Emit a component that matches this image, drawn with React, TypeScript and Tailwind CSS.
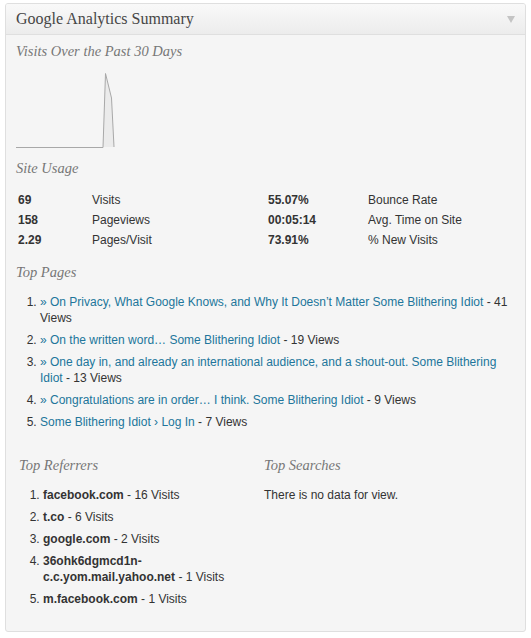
import React from "react";

const serif = { fontFamily: '"Liberation Serif", Georgia, serif' };

function H({ children, className = "" }: { children: React.ReactNode; className?: string }) {
  return (
    <h4
      className={`italic text-[14.5px] leading-[16px] text-[#777] ${className}`}
      style={serif}
    >
      {children}
    </h4>
  );
}

const A = ({ children }: { children: React.ReactNode }) => (
  <a className="text-[#21759b]">{children}</a>
);

export default function App() {
  const pages: React.ReactNode[] = [
    <>
      <A>» On Privacy, What Google Knows, and Why It Doesn’t Matter Some Blithering Idiot</A> - 41 Views
    </>,
    <>
      <A>» On the written word… Some Blithering Idiot</A> - 19 Views
    </>,
    <>
      <A>» One day in, and already an international audience, and a shout-out. Some Blithering Idiot</A> - 13 Views
    </>,
    <>
      <A>» Congratulations are in order… I think. Some Blithering Idiot</A> - 9 Views
    </>,
    <>
      <A>Some Blithering Idiot › Log In</A> - 7 Views
    </>,
  ];
  const refs = [
    ["facebook.com", "16"],
    ["t.co", "6"],
    ["google.com", "2"],
    ["36ohk6dgmcd1n-c.c.yom.mail.yahoo.net", "1"],
    ["m.facebook.com", "1"],
  ];
  const usage = [
    ["69", "Visits", "55.07%", "Bounce Rate"],
    ["158", "Pageviews", "00:05:14", "Avg. Time on Site"],
    ["2.29", "Pages/Visit", "73.91%", "% New Visits"],
  ];
  return (
    <div
      className="bg-white w-[531px] h-[638px] pt-[3px] pl-[5px]"
      style={{ fontFamily: '"Liberation Sans", Arial, sans-serif' }}
    >
      <div className="w-[521px] h-[629px] border border-[#dfdfdf] rounded-[3px] bg-[#f5f5f5] overflow-hidden">
        <div className="h-[31px] flex items-center justify-between pl-[10px] pr-[10px] border-b border-[#dfdfdf] bg-gradient-to-b from-[#f9f9f9] to-[#ececec]">
          <span className="text-[16px] text-[#464646]" style={serif}>
            Google Analytics Summary
          </span>
          <svg width="8" height="7" viewBox="0 0 8 7" className="mt-[1px]">
            <path d="M0 0 H8 L4 7 Z" fill="#c4c4c4" />
          </svg>
        </div>
        <div className="pl-[10px] pr-[10px] text-[12px] text-[#333]">
          <H className="mt-[8px]">Visits Over the Past 30 Days</H>
          <svg width="110" height="75" className="mt-[14px] block" viewBox="0 0 110 75">
            <path d="M87 74 L89.5 0.5 L95.5 25 L98 74 Z" fill="#ebebeb" />
            <path d="M0 74.5 L87 74.5 L89.5 0.5 L95.5 25 L98 74" fill="none" stroke="#a8a8a8" strokeWidth="1" />
          </svg>
          <H className="mt-[12px]">Site Usage</H>
          <div className="mt-[14px] pl-[2px]">
            {usage.map((r) => (
              <div key={r[0]} className="flex h-[20px] items-center">
                <span className="w-[74px] font-bold">{r[0]}</span>
                <span className="w-[176px]">{r[1]}</span>
                <span className="w-[100px] font-bold">{r[2]}</span>
                <span>{r[3]}</span>
              </div>
            ))}
          </div>
          <H className="mt-[14px]">Top Pages</H>
          <ol className="mt-[14px] list-decimal pl-[24px] pr-[4px] leading-[16px]">
            {pages.map((p, i) => (
              <li key={i} className="mb-[6px]">
                {p}
              </li>
            ))}
          </ol>
          <div className="flex mt-[27px]">
            <div className="w-[248px] pl-[3px]">
              <H>Top Referrers</H>
              <ol className="mt-[14px] list-decimal pl-[24px] leading-[16px]">
                {refs.map((r) => (
                  <li key={r[0]} className="mb-[6px] break-words">
                    <b>{r[0]}</b> - {r[1]} Visits
                  </li>
                ))}
              </ol>
            </div>
            <div>
              <H>Top Searches</H>
              <p className="mt-[14px] leading-[16px]">There is no data for view.</p>
            </div>
          </div>
        </div>
      </div>
    </div>
  );
}
